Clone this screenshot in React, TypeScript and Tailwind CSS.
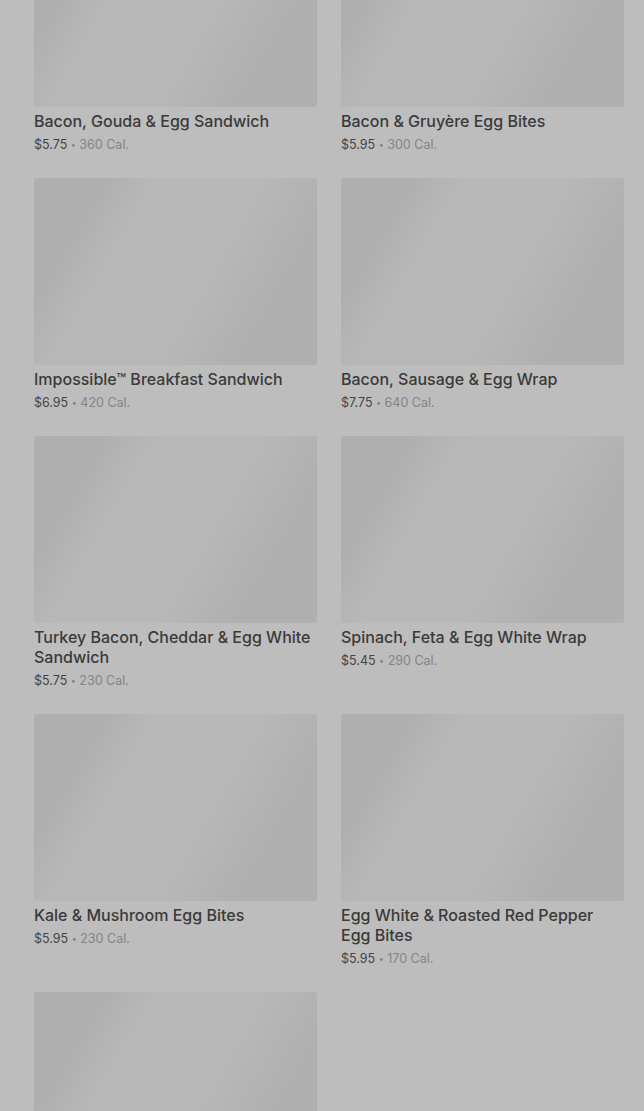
type Item = { name: string; price: string; cal: string };

const items: Item[] = [
  { name: 'Bacon, Gouda & Egg Sandwich', price: '$5.75', cal: '360 Cal.' },
  { name: 'Bacon & Gruyère Egg Bites', price: '$5.95', cal: '300 Cal.' },
  { name: 'Impossible™ Breakfast Sandwich', price: '$6.95', cal: '420 Cal.' },
  { name: 'Bacon, Sausage & Egg Wrap', price: '$7.75', cal: '640 Cal.' },
  { name: 'Turkey Bacon, Cheddar & Egg White Sandwich', price: '$5.75', cal: '230 Cal.' },
  { name: 'Spinach, Feta & Egg White Wrap', price: '$5.45', cal: '290 Cal.' },
  { name: 'Kale & Mushroom Egg Bites', price: '$5.95', cal: '230 Cal.' },
  { name: 'Egg White & Roasted Red Pepper Egg Bites', price: '$5.95', cal: '170 Cal.' },
  { name: '', price: '', cal: '' },
];

function Card({ item }: { item: Item }) {
  return (
    <div className="flex flex-col">
      <div className="h-[187px] rounded-[2px] bg-[linear-gradient(120deg,#afafaf_18%,#b8b8b8_32%,#b8b8b8_58%,#b0b0b0_78%)]" />
      {item.name && (
        <div className="pt-[4px] pb-[24px]">
          <h3 className="text-[16px] leading-[20px] font-[550] text-[#3a3a3a]">{item.name}</h3>
          <p className="mt-[5px] text-[12.5px] leading-[18px]">
            <span className="text-[#444]">{item.price}</span>
            <span className="text-[#848484]"> <span className="text-[9px] align-[1px]">•</span> {item.cal}</span>
          </p>
        </div>
      )}
    </div>
  );
}

export default function App() {
  return (
    <div className="min-h-screen bg-[#bdbdbd] overflow-hidden" style={{ fontFamily: 'Inter, "Noto Sans", sans-serif' }}>
      <div className="-mt-[80px] pl-[34px] pr-[20px] grid grid-cols-2 gap-x-[24px]">
        {items.map((item, i) => (
          <Card key={i} item={item} />
        ))}
      </div>
    </div>
  );
}
